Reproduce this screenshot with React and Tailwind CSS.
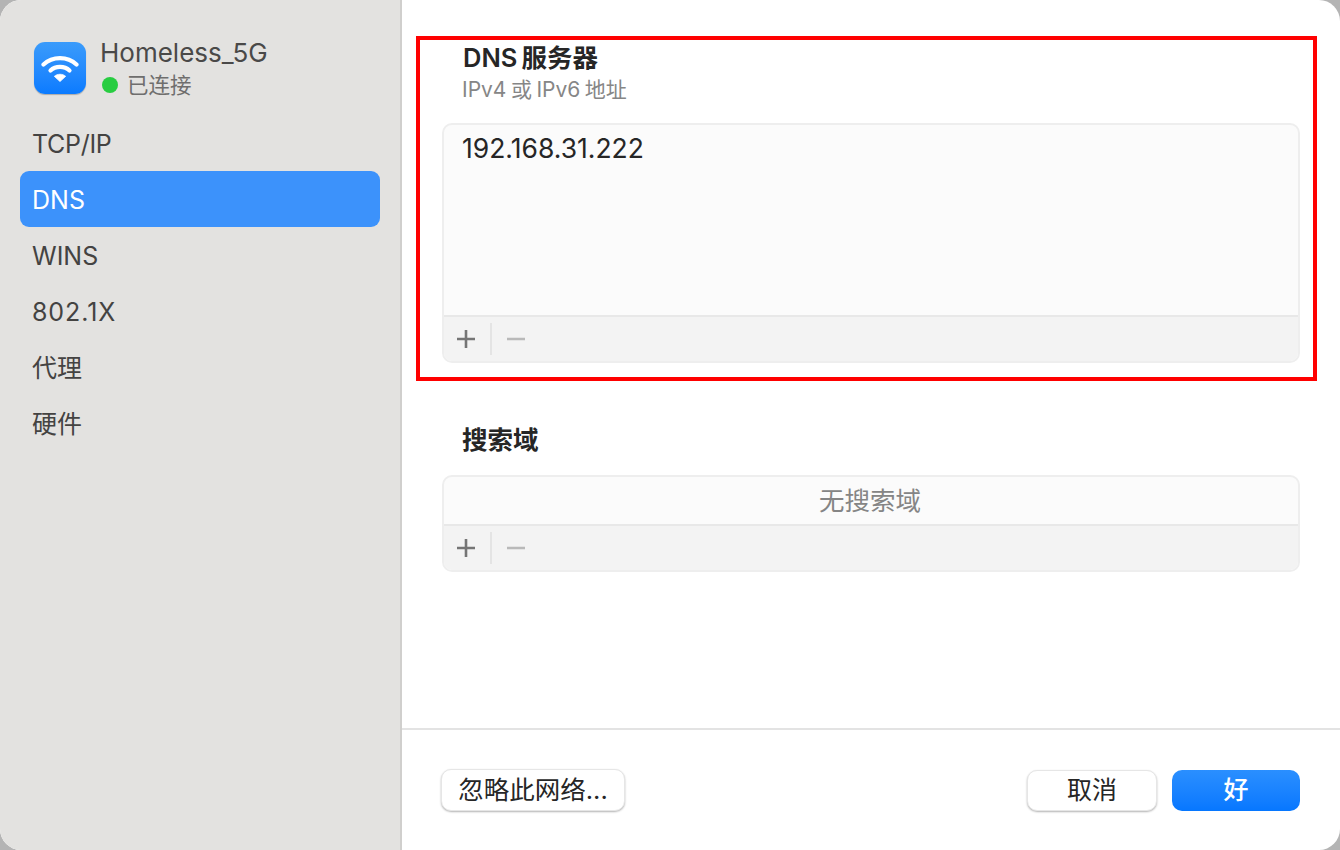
const FONT = 'font-["Inter","Noto_Sans_CJK_SC",sans-serif]';

function WifiTile() {
  return (
    <div className="w-[52px] h-[52px] rounded-[11px] bg-gradient-to-b from-[#3a9bfb] to-[#0a7bff] shadow-[0_1px_1px_rgba(0,0,0,0.25)] flex items-center justify-center shrink-0">
      <svg width="38" height="32" viewBox="0 0 38 32" fill="none">
        <path d="M2.5 12.5C11.5 4 26.5 4 35.500 12.500" stroke="white" strokeWidth="4.200" strokeLinecap="round" />
        <path d="M9.500 18.500C14.500 13.700 23.500 13.700 28.500 18.500" stroke="white" strokeWidth="4.200" strokeLinecap="round" />
        <path d="M19 29.500L13.300 24.300C16.500 21.600 21.500 21.600 24.700 24.300Z" fill="white" stroke="white" strokeWidth="0.800" strokeLinejoin="round" />
      </svg>
    </div>
  );
}

function SideItem({ label, active, className = "" }) {
  return (
    <div className={`h-[56px] pl-[12px] pt-[4px] flex items-center rounded-[9px] text-[25px] ${className} ${active ? "bg-[#3c92fb] text-white" : "text-[#444342]"}`}>
      {label}
    </div>
  );
}

function ListToolbar() {
  return (
    <div className="h-[46px] border-t-2 border-[#e8e8e8] bg-[#f3f3f3] flex items-center shrink-0">
      <div className="w-[48px] h-[32px] border-r-2 border-[#e4e4e4] flex items-center justify-center">
        <svg width="18" height="18" viewBox="0 0 18 18" className="mr-[3px]">
          <path d="M9 0.500V17.500M0.500 9H17.500" stroke="#757575" strokeWidth="2.600" strokeLinecap="round" />
        </svg>
      </div>
      <div className="w-[47px] flex items-center justify-center">
        <svg width="18" height="4" viewBox="0 0 18 4">
          <path d="M0.500 2H17.500" stroke="#b9b9b9" strokeWidth="2.600" strokeLinecap="round" />
        </svg>
      </div>
    </div>
  );
}

function Button({ children, className }) {
  return (
    <div className={`h-[41px] rounded-[10px] flex items-center justify-center ${className}`}>
      {children}
    </div>
  );
}

export default function App() {
  return (
    <div className={`w-[1340px] h-[850px] bg-[#b4b4b4] overflow-hidden ${FONT}`}>
      <div className="w-full h-full rounded-[21px] overflow-hidden bg-white flex">
        <aside className="w-[402px] shrink-0 h-full bg-[#e3e2e0] border-r-2 border-[#d0cfcd] pl-[20px] pr-[20px]">
          <div className="flex pl-[14px] pt-[42px] h-[115px] items-start">
            <WifiTile />
            <div className="ml-[14px] -mt-[4px]">
              <div className="text-[26px] leading-[30px] text-[#4a4948]">Homeless_5G</div>
              <div className="flex items-center mt-[3px]">
                <span className="w-[16px] h-[16px] rounded-full bg-[#28cd41] ml-[2px]" />
                <span className="ml-[9px] text-[21.5px] leading-[28px] text-[#6f6e6d]">已连接</span>
              </div>
            </div>
          </div>
          <div>
            <SideItem label="TCP/IP" className="tracking-[-0.3px]" />
            <SideItem label="DNS" active />
            <SideItem label="WINS" />
            <SideItem label="802.1X" className="tracking-[0.9px]" />
            <SideItem label="代理" />
            <SideItem label="硬件" />
          </div>
        </aside>

        <main className="flex-1 h-full flex flex-col">
          <div className="flex-1 pl-[14px] pr-[23px] pt-[36px]">
            <section className="h-[345px] border-4 border-[#ff0000] pl-[22px] pr-[13px]">
              <h2 className="pl-[21px] pt-[2px] text-[25.500px] leading-[32px] font-semibold text-[#262626] flex gap-[4px]">
                <span>DNS</span>
                <span>服务器</span>
              </h2>
              <p className="pl-[20px] text-[21px] leading-[28px] mt-[2px] text-[#868686] flex gap-[4.500px]">
                <span>IPv4</span>
                <span>或</span>
                <span>IPv6</span>
                <span>地址</span>
              </p>
              <div className="mt-[19px] h-[240px] rounded-[10px] border-2 border-[#eeeeee] bg-[#fbfbfb] flex flex-col overflow-hidden">
                <div className="flex-1 pl-[18px] pt-[7px] text-[26.500px] leading-[32px] text-[#262626]">192.168.31.222</div>
                <ListToolbar />
              </div>
            </section>
            <section className="pl-[26px] pr-[17px]">
              <h2 className="pl-[20px] mt-[42px] text-[25.500px] leading-[34px] font-semibold text-[#262626]">搜索域</h2>
              <div className="mt-[18px] h-[97px] rounded-[10px] border-2 border-[#eeeeee] bg-[#fbfbfb] flex flex-col overflow-hidden">
                <div className="flex-1 flex items-center justify-center pr-[2px] pt-[1px] text-[25.500px] text-[#858585]">无搜索域</div>
                <ListToolbar />
              </div>
            </section>
          </div>
          <footer className="h-[122px] shrink-0 border-t-2 border-[#e3e3e3] pl-[39px] pr-[40px] flex items-start justify-between pt-[39px]">
            <Button className="w-[184px] h-[42px] text-[25.500px] bg-white text-[#262626] border border-[#e6e6e6] shadow-[0_1px_2px_rgba(0,0,0,0.3)]">忽略此网络...</Button>
            <div className="flex gap-[15px] pt-[1px]">
              <Button className="w-[130px] text-[25px] bg-white text-[#262626] border border-[#e6e6e6] shadow-[0_1px_2px_rgba(0,0,0,0.3)]">取消</Button>
              <Button className="w-[128px] h-[40px] text-[25px] bg-gradient-to-b from-[#2a8fff] to-[#0677ff] text-white font-medium">好</Button>
            </div>
          </footer>
        </main>
      </div>
    </div>
  );
}
